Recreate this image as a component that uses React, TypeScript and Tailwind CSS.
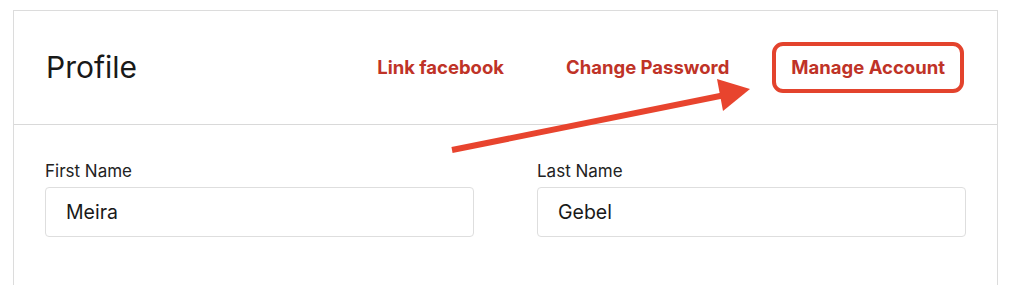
const Field = ({ label, value }: { label: string; value: string }) => (
  <div className="flex flex-col">
    <label className="text-[17px] leading-[20px] text-[#222] mb-[6px]">{label}</label>
    <input
      type="text"
      defaultValue={value}
      className="h-[50px] w-full rounded-[4px] border border-[#dedede] px-[20px] text-[19.5px] text-[#191919] outline-none"
    />
  </div>
);

const App = () => {
  return (
    <div
      className="relative h-[285px] w-[1024px] overflow-hidden bg-white pl-[13px] pt-[10px]"
      style={{ fontFamily: "Inter, 'Noto Sans', sans-serif" }}
    >
      <div className="h-[300px] w-[985px] border border-[#dcdcdc]">
        <div className="flex h-[114px] items-center border-b border-[#d9d9d9] pl-[32px]">
          <h1 className="text-[30px] font-normal text-[#191919]">Profile</h1>
          <div className="ml-auto mr-[33px] flex items-center text-[18.5px] font-bold text-[#bf3327]">
            <a className="mr-[62px]">Link facebook</a>
            <a className="mr-[43px]">Change Password</a>
            <a className="rounded-[11px] border-[4px] border-[#e3432d] px-[15px] py-[8px]">Manage Account</a>
          </div>
        </div>
        <div className="grid grid-cols-2 gap-[63px] px-[31px] pt-[36px]">
          <Field label="First Name" value="Meira" />
          <Field label="Last Name" value="Gebel" />
        </div>
      </div>
      <svg className="pointer-events-none absolute left-0 top-0" width="1024" height="285">
        <line x1="452" y1="150" x2="725" y2="95" stroke="#e8442e" strokeWidth="6" />
        <polygon points="717,79 750,89 723,111" fill="#e8442e" />
      </svg>
    </div>
  );
};

export default App;
